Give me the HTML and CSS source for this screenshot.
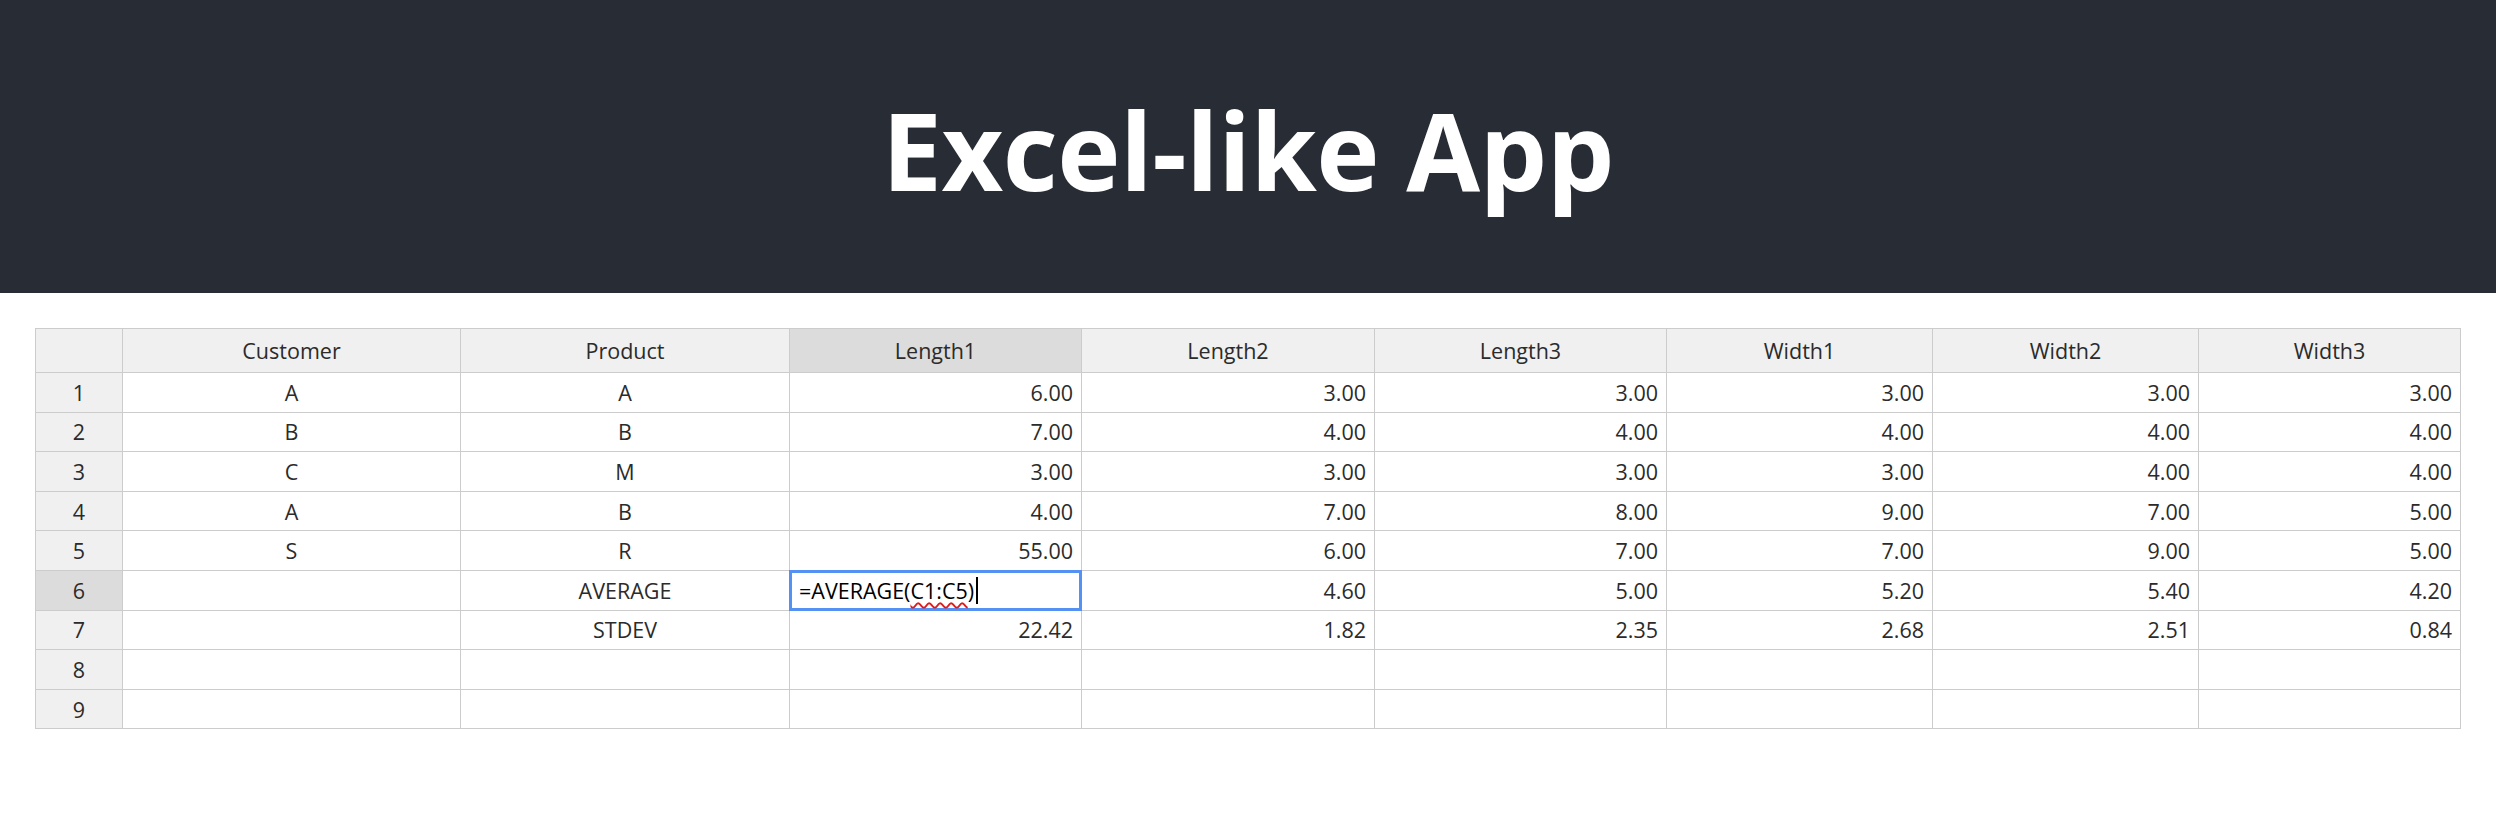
FILE: index.html
```html
<!DOCTYPE html>
<html lang="en">
<head>
<meta charset="utf-8">
<title>Excel-like App</title>
<link rel="stylesheet" href="styles.css">
</head>
<body>
<header class="app-header">
  <h1 class="app-title">Excel-like App</h1>
</header>
<main class="sheet-wrap">
  <div class="sheet">
    <div class="c hdr corner"></div>
    <div class="c hdr">Customer</div>
    <div class="c hdr">Product</div>
    <div class="c hdr active">Length1</div>
    <div class="c hdr">Length2</div>
    <div class="c hdr">Length3</div>
    <div class="c hdr">Width1</div>
    <div class="c hdr">Width2</div>
    <div class="c hdr">Width3</div>

    <div class="c rh">1</div><div class="c ctr">A</div><div class="c ctr">A</div><div class="c num">6.00</div><div class="c num">3.00</div><div class="c num">3.00</div><div class="c num">3.00</div><div class="c num">3.00</div><div class="c num">3.00</div>
    <div class="c rh">2</div><div class="c ctr">B</div><div class="c ctr">B</div><div class="c num">7.00</div><div class="c num">4.00</div><div class="c num">4.00</div><div class="c num">4.00</div><div class="c num">4.00</div><div class="c num">4.00</div>
    <div class="c rh">3</div><div class="c ctr">C</div><div class="c ctr">M</div><div class="c num">3.00</div><div class="c num">3.00</div><div class="c num">3.00</div><div class="c num">3.00</div><div class="c num">4.00</div><div class="c num">4.00</div>
    <div class="c rh">4</div><div class="c ctr">A</div><div class="c ctr">B</div><div class="c num">4.00</div><div class="c num">7.00</div><div class="c num">8.00</div><div class="c num">9.00</div><div class="c num">7.00</div><div class="c num">5.00</div>
    <div class="c rh">5</div><div class="c ctr">S</div><div class="c ctr">R</div><div class="c num">55.00</div><div class="c num">6.00</div><div class="c num">7.00</div><div class="c num">7.00</div><div class="c num">9.00</div><div class="c num">5.00</div>
    <div class="c rh active">6</div><div class="c ctr"></div><div class="c ctr">AVERAGE</div>
    <div class="c editing"><div class="editor">=AVERAGE(<span class="spell">C1:C5</span>)<span class="caret"></span></div></div>
    <div class="c num">4.60</div><div class="c num">5.00</div><div class="c num">5.20</div><div class="c num">5.40</div><div class="c num">4.20</div>
    <div class="c rh">7</div><div class="c ctr"></div><div class="c ctr">STDEV</div><div class="c num">22.42</div><div class="c num">1.82</div><div class="c num">2.35</div><div class="c num">2.68</div><div class="c num">2.51</div><div class="c num">0.84</div>
    <div class="c rh">8</div><div class="c"></div><div class="c"></div><div class="c"></div><div class="c"></div><div class="c"></div><div class="c"></div><div class="c"></div><div class="c"></div>
    <div class="c rh">9</div><div class="c"></div><div class="c"></div><div class="c"></div><div class="c"></div><div class="c"></div><div class="c"></div><div class="c"></div><div class="c"></div>
  </div>
</main>
</body>
</html>
```

FILE: styles.css
```css
* { box-sizing: border-box; }

html, body {
  margin: 0;
  padding: 0;
  background: #ffffff;
  font-family: "Open Sans", "Noto Sans", "Liberation Sans", sans-serif;
}

.app-header {
  height: 293px;
  background: #282c34;
  display: flex;
  align-items: center;
  justify-content: center;
  padding-top: 6px;
}

.app-title {
  margin: 0;
  color: #ffffff;
  font-size: 107px;
  font-weight: 700;
  line-height: 1;
  letter-spacing: -0.5px;
}

.sheet-wrap {
  padding: 35px 35px 0 35px;
}

.sheet {
  display: grid;
  grid-template-columns: 87px 338px 329px 292px 293px 292px 266px 266px 262px;
  grid-template-rows: 44px repeat(9, 39.6px);
  width: 2426px;
  border-top: 1px solid #cccccc;
  border-left: 1px solid #cccccc;
  font-size: 21.5px;
  color: #2b2b2b;
}

.c {
  border-right: 1px solid #cccccc;
  border-bottom: 1px solid #cccccc;
  display: flex;
  align-items: center;
  padding: 0 8px;
  white-space: nowrap;
  background: #ffffff;
}

.hdr {
  background: #f0f0f0;
  justify-content: center;
}

.rh {
  background: #f0f0f0;
  justify-content: center;
}

.active {
  background: #dcdcdc;
}

.ctr { justify-content: center; }

.num { justify-content: flex-end; }

.editing {
  position: relative;
  padding: 0;
}

.editor {
  position: absolute;
  left: -1px;
  top: -1px;
  right: -1px;
  bottom: -1px;
  border: 3px solid #5590f3;
  background: #ffffff;
  color: #000000;
  display: flex;
  align-items: center;
  padding-left: 7px;
  z-index: 2;
}

.spell {
  text-decoration: underline wavy #e01b1b;
  text-decoration-thickness: 1.5px;
  text-underline-offset: 3px;
}

.caret {
  display: inline-block;
  width: 2px;
  height: 27px;
  background: #000000;
  margin-left: 2px;
}
```
